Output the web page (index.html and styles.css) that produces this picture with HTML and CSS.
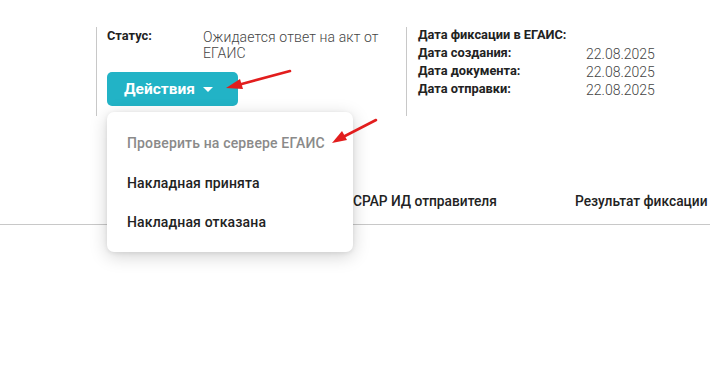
FILE: index.html
```html
<!DOCTYPE html>
<html lang="ru">
<head>
<meta charset="utf-8">
<link rel="stylesheet" href="styles.css">
</head>
<body>
<div class="page">
  <div class="info">
    <div class="col col-left">
      <div class="status-row">
        <div class="label">Статус:</div>
        <div class="status-value">Ожидается ответ на акт от ЕГАИС</div>
      </div>
      <button class="actions-btn">Действия <span class="caret"></span></button>
    </div>
    <div class="col col-right">
      <div class="dates">
        <div class="label">Дата фиксации в ЕГАИС:</div><div class="value"></div>
        <div class="label">Дата создания:</div><div class="value">22.08.2025</div>
        <div class="label">Дата документа:</div><div class="value">22.08.2025</div>
        <div class="label">Дата отправки:</div><div class="value">22.08.2025</div>
      </div>
    </div>
  </div>
  <div class="table-head">
    <div class="th th-name">Наименование</div>
    <div class="th th-fsrar">ФСРАР ИД отправителя</div>
    <div class="th th-result">Результат фиксации</div>
  </div>

  <div class="menu">
    <div class="menu-item disabled">Проверить на сервере ЕГАИС</div>
    <div class="menu-item">Накладная принята</div>
    <div class="menu-item">Накладная отказана</div>
  </div>

  <svg class="annot" width="710" height="377" viewBox="0 0 710 377">
    <line x1="290" y1="71" x2="238" y2="85" stroke="#e21d1d" stroke-width="2.6" stroke-linecap="round"/>
    <polygon points="226,88 240,79 243,89" fill="#e21d1d"/>
    <line x1="376" y1="120" x2="343" y2="137" stroke="#e21d1d" stroke-width="2.6" stroke-linecap="round"/>
    <polygon points="332,143 342,131 347,140" fill="#e21d1d"/>
  </svg>
</div>
</body>
</html>
```

FILE: styles.css
```css
* { box-sizing: border-box; }
html, body { margin: 0; padding: 0; background: #fff; }
body {
  font-family: Roboto, "Liberation Sans", Arial, sans-serif;
  color: #222;
  width: 710px;
  height: 377px;
  overflow: hidden;
}
.page { position: relative; width: 710px; height: 377px; }

.info {
  display: flex;
  padding-top: 27px;
  padding-left: 96px;
}
.col {
  border-left: 1px solid #c8c8c8;
  height: 89px;
}
.col-left {
  width: 310px;
  padding-left: 10px;
  padding-top: 2px;
}
.col-right {
  flex: 1;
  padding-left: 11px;
  padding-top: 1px;
}
.label {
  font-size: 12.8px;
  font-weight: 700;
  color: #222;
  line-height: 14px;
}
.status-row { display: flex; }
.status-row .label { width: 96px; }
.status-value {
  width: 192px;
  font-size: 14px;
  font-weight: 300;
  color: #444;
  line-height: 16px;
  letter-spacing: 0.12px;
}
.actions-btn {
  margin-top: 11px;
  width: 131px;
  height: 34px;
  border: none;
  border-radius: 5px;
  background: #22b3c6;
  color: #fff;
  font-family: inherit;
  font-size: 15.5px;
  font-weight: 700;
  padding: 0 8px 0 0;
  display: flex;
  align-items: center;
  justify-content: center;
  gap: 8px;
}
.caret {
  width: 0; height: 0;
  border-left: 5.5px solid transparent;
  border-right: 5.5px solid transparent;
  border-top: 5.5px solid #fff;
  margin-top: 1px;
}
.dates {
  display: grid;
  grid-template-columns: 168px auto;
  grid-auto-rows: 18px;
}
.dates .value {
  font-size: 14px;
  font-weight: 300;
  color: #444;
  line-height: 18px;
  margin-top: -1px;
}

.table-head {
  display: flex;
  margin-top: 70px;
  height: 39px;
  align-items: center;
  border-bottom: 1px solid #c8c8c8;
  padding-bottom: 8px;
}
.th {
  font-size: 13.75px;
  font-weight: 500;
  color: #222;
  white-space: nowrap;
}
.th-name { margin-left: 140px; width: 202px; }
.th-fsrar { width: 233px; }

.menu {
  position: absolute;
  left: 107px;
  top: 112px;
  width: 246px;
  height: 140px;
  background: #fff;
  border-radius: 7px;
  box-shadow: 0 4px 18px rgba(0,0,0,0.18), 0 1px 4px rgba(0,0,0,0.08);
  padding-top: 19px;
}
.menu-item {
  font-size: 14px;
  font-weight: 500;
  color: #222;
  padding-left: 20px;
  height: 39.5px;
  line-height: 24px;
  letter-spacing: 0.15px;
}
.menu-item.disabled { color: #8a8a8a; }

.annot { position: absolute; left: 0; top: 0; pointer-events: none; }
```
